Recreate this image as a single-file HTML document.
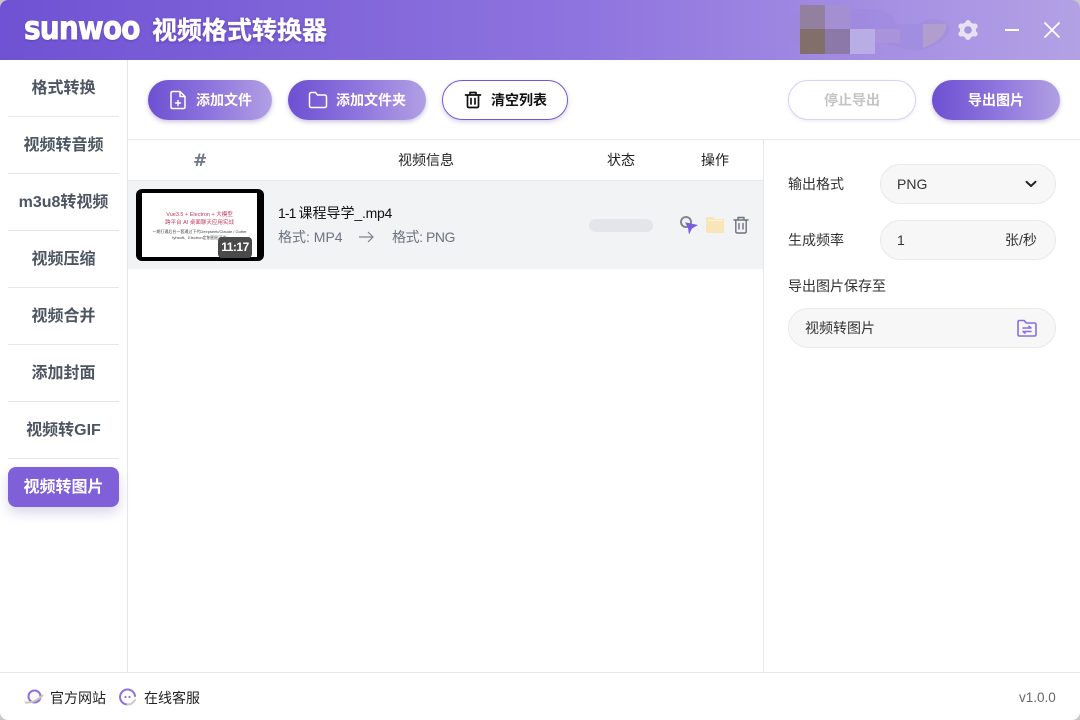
<!DOCTYPE html>
<html lang="zh-CN">
<head>
<meta charset="utf-8">
<title>视频格式转换器</title>
<style>
*{box-sizing:border-box;margin:0;padding:0}
html,body{width:1080px;height:720px;overflow:hidden;background:#c8c8c8}
body{font-family:"Liberation Sans","Noto Sans CJK SC",sans-serif;color:#222;position:relative}
.abs{position:absolute;white-space:nowrap}
#app{position:absolute;left:0;top:0;width:1080px;height:720px;background:#fff;border-radius:8px;overflow:hidden}
#head{position:absolute;left:0;top:0;width:1080px;height:60px;background:linear-gradient(90deg,#6f52d3 0%,#8f75df 55%,#b3a1e5 100%)}
.logo{left:24px;top:9px;font:bold 32px/38px "DejaVu Sans",sans-serif;color:#fff;letter-spacing:-1px;transform-origin:left center;transform:scaleX(.875);text-shadow:0 1px 3px rgba(50,20,120,.4);-webkit-text-stroke:.9px #fff}
.title{left:152px;top:13px;font-size:25px;line-height:36px;font-weight:700;color:#fff;text-shadow:0 1px 3px rgba(50,20,120,.45);-webkit-text-stroke:.3px #fff}
.blur{position:absolute}
.side{position:absolute;left:0;top:60px;width:128px;height:612px;border-right:1px solid #e6e6e8}
.nav{position:absolute;left:8px;width:111px;height:40px;text-align:center;font-size:16px;line-height:42px;font-weight:700;color:#4d5562}
.sep{position:absolute;left:8px;width:111px;height:1px;background:#e6e7e9}
.nav.on{background:#7f60d9;color:#fff;border-radius:8px;box-shadow:0 6px 12px rgba(90,70,170,.22)}
.btn{position:absolute;top:80px;height:40px;border-radius:20px;font-size:14px;line-height:40px;font-weight:700;color:#fff;background:linear-gradient(90deg,#6d50d2 0%,#8e74dd 50%,#b1a0e3 100%);box-shadow:0 2px 5px rgba(80,60,150,.3)}
.btn span{position:absolute;top:0;white-space:nowrap}
.btn svg{position:absolute}
.hline{position:absolute;height:1px;background:#e7e8ea}
.vline{position:absolute;width:1px;background:#e7e8ea}
.th{position:absolute;top:150px;font-size:14px;line-height:20px;color:#222;white-space:nowrap}
.field{position:absolute;background:#f7f7f7;border:1px solid #e9e9e9;border-radius:20px;height:40px}
.lbl{position:absolute;left:788px;font-size:14px;line-height:20px;color:#333;white-space:nowrap}
</style>
</head>
<body>
<div id="app">
  <div id="head">
    <div class="abs logo">sunwoo</div>
    <div class="abs title">视频格式转换器</div>
    <svg class="blur" style="left:778px;top:4px" width="180" height="50" viewBox="0 0 180 50">
      <path d="M2 26Q18 8 22 5H98Q115 8 118 20H140Q160 8 172 24Q170 36 150 44Q135 50 118 42L100 38Q85 50 40 46Q10 44 2 26Z" fill="#9c87d9" opacity=".35"/>
      <rect x="22" y="1" width="25" height="24" fill="#93809f"/>
      <rect x="47" y="1" width="25" height="24" fill="#a48fd2"/>
      <rect x="22" y="25" width="25" height="25" fill="#826f6b"/>
      <rect x="47" y="25" width="25" height="25" fill="#8c79a8"/>
      <rect x="72" y="25" width="25" height="25" fill="#b9ade6"/>
      <rect x="97" y="25" width="25" height="14" fill="#ac96d8" opacity=".7"/>
      <path d="M145 20H168Q170 34 145 44Z" fill="#b7a2c9" opacity=".75"/>
    </svg>
    <svg class="abs" style="left:956px;top:18px" width="24" height="24" viewBox="0 0 24 24">
      <g fill="#e7e2f2"><circle cx="12" cy="12" r="8"/><circle cx="12" cy="4.800" r="2.800"/><circle cx="12" cy="19.200" r="2.800"/><circle cx="5.200" cy="8.200" r="2.800"/><circle cx="18.800" cy="8.200" r="2.800"/><circle cx="5.200" cy="15.800" r="2.800"/><circle cx="18.800" cy="15.800" r="2.800"/></g>
      <circle cx="12" cy="12" r="3.800" fill="#a694e0"/>
    </svg>
    <div class="abs" style="left:1005px;top:29px;width:14px;height:2px;background:#fff"></div>
    <svg class="abs" style="left:1043px;top:21px" width="18" height="18" viewBox="0 0 18 18"><path d="M1.500 1.500L16.500 16.500M16.500 1.500L1.500 16.500" stroke="#fff" stroke-width="1.800"/></svg>
  </div>

  <div class="side"></div>
  <div class="nav" style="top:68px">格式转换</div>
  <div class="sep" style="top:116px"></div>
  <div class="nav" style="top:125px">视频转音频</div>
  <div class="sep" style="top:173px"></div>
  <div class="nav" style="top:182px">m3u8转视频</div>
  <div class="sep" style="top:230px"></div>
  <div class="nav" style="top:239px">视频压缩</div>
  <div class="sep" style="top:287px"></div>
  <div class="nav" style="top:296px">视频合并</div>
  <div class="sep" style="top:344px"></div>
  <div class="nav" style="top:353px">添加封面</div>
  <div class="sep" style="top:401px"></div>
  <div class="nav" style="top:410px">视频转GIF</div>
  <div class="sep" style="top:458px"></div>
  <div class="nav on" style="top:467px">视频转图片</div>

  <div class="btn" style="left:148px;width:124px">
    <svg style="left:20px;top:10px" width="20" height="20" viewBox="0 0 20 20" fill="none" stroke="#fff" stroke-width="1.500" stroke-linejoin="round" stroke-linecap="round"><path d="M3 3Q3 1.500 4.500 1.500H12L17 6.500V17Q17 18.500 15.500 18.500H4.500Q3 18.500 3 17ZM12 1.500V6.500H17M10 10.500V15.500M7.500 13H12.500"/></svg>
    <span style="left:48px">添加文件</span>
  </div>
  <div class="btn" style="left:288px;width:138px">
    <svg style="left:20px;top:10px" width="20" height="20" viewBox="0 0 20 20" fill="none" stroke="#fff" stroke-width="1.500" stroke-linejoin="round"><path d="M1.500 4.500Q1.500 2.500 3.500 2.500H7.500L9.500 5H16.500Q18.500 5 18.500 7V15.500Q18.500 17.500 16.500 17.500H3.500Q1.500 17.500 1.500 15.500Z"/></svg>
    <span style="left:48px">添加文件夹</span>
  </div>
  <div class="btn" style="left:442px;width:126px;background:#fff;border:1px solid #7358d6;color:#111;box-shadow:0 2px 5px rgba(90,70,170,.25);line-height:38px">
    <svg style="left:20px;top:9px" width="20" height="20" viewBox="0 0 20 20" fill="none" stroke="#111" stroke-width="1.700" stroke-linejoin="round" stroke-linecap="round"><path d="M2.500 5H17.500M7 5V2.500H13V5M4.500 5V16Q4.500 17.500 6 17.500H14Q15.500 17.500 15.500 16V5M8 8.500V14M12 8.500V14"/></svg>
    <span style="left:48px">清空列表</span>
  </div>
  <div class="btn" style="left:788px;width:128px;background:#fff;border:1px solid #d9d0f3;color:#c4c4c4;box-shadow:0 1px 3px rgba(90,70,170,.12);line-height:38px;text-align:center">停止导出</div>
  <div class="btn" style="left:932px;width:128px;text-align:center">导出图片</div>

  <div class="hline" style="left:128px;top:139px;width:952px"></div>
  <div class="vline" style="left:763px;top:140px;height:532px"></div>
  <div class="hline" style="left:0;top:672px;width:1080px"></div>

  <div class="abs" style="left:193px;top:151px;font:bold 17px/20px 'DejaVu Sans',sans-serif;color:#6f7786">#</div>
  <div class="th" style="left:398px">视频信息</div>
  <div class="th" style="left:607px">状态</div>
  <div class="th" style="left:701px">操作</div>

  <div class="abs" style="left:128px;top:180px;width:635px;height:89px;background:#f2f3f5;border-top:1px solid #e8e9eb"></div>
  <div class="abs" style="left:136px;top:189px;width:128px;height:72px;background:#000;border-radius:6px"></div>
  <div class="abs" style="left:142px;top:193px;width:115px;height:64px;background:#fff"></div>
  <div class="abs" style="left:142px;top:211px;width:115px;text-align:center;font-size:5.500px;line-height:8px;color:#c0395c">Vue3.5 + Electron + 大模型<br>跨平台 AI 桌面聊天应用实战</div>
  <div class="abs" style="left:142px;top:229px;width:115px;text-align:center;font-size:4px;line-height:6px;color:#444">一期打通后台一套通过下代Deepseek/Claude / Gutter<br>fyhsoft、Electron定制图形开发</div>
  <div class="abs" style="left:218px;top:237px;width:34px;height:21px;background:#4a4a4a;border-radius:4px;color:#fff;font-size:12px;font-weight:700;line-height:21px;text-align:center;letter-spacing:-.5px">11:17</div>
  <div class="abs" style="left:278px;top:203px;font-size:14px;line-height:20px;color:#111"><span style="letter-spacing:-.9px">1-1 </span>课程导学<span style="letter-spacing:-.3px">_.mp4</span></div>
  <div class="abs" style="left:278px;top:227px;font-size:14px;line-height:20px;color:#6c7480">格式: MP4</div>
  <svg class="abs" style="left:358px;top:230px" width="16" height="14" viewBox="0 0 16 14" fill="none" stroke="#7b828e" stroke-width="1.200"><path d="M1 7H15M10 2L15 7L10 12"/></svg>
  <div class="abs" style="left:392px;top:227px;font-size:14px;line-height:20px;color:#6c7480;letter-spacing:-.45px">格式: PNG</div>
  <div class="abs" style="left:589px;top:219px;width:64px;height:13px;background:#e4e5e8;border-radius:7px"></div>

  <svg class="abs" style="left:678px;top:214px" width="24" height="24" viewBox="0 0 24 24">
    <circle cx="8" cy="8" r="5" fill="none" stroke="#84868c" stroke-width="2"/>
    <path d="M7 8.300L20 11L14 14.500L11 20.500L10 14Z" fill="#7a5ce0"/>
  </svg>
  <svg class="abs" style="left:705px;top:216px" width="20" height="18" viewBox="0 0 20 18">
    <path d="M1 2Q1 1 2 1H8L10 3H18Q19 3 19 4V16Q19 17 18 17H2Q1 17 1 16Z" fill="#f8e6b8"/>
    <path d="M3 4.500H17" stroke="#fdf4dc" stroke-width="1"/>
  </svg>
  <svg class="abs" style="left:732px;top:216px" width="18" height="18" viewBox="0 0 18 18" fill="none" stroke="#6c727c" stroke-width="1.400" stroke-linejoin="round" stroke-linecap="round"><path d="M2 4H16M6 4V1.500H12V4M3.800 4V15.500Q3.800 17 5.300 17H12.700Q14.200 17 14.200 15.500V4M7 7.500V13M11 7.500V13"/></svg>

  <div class="lbl" style="top:174px">输出格式</div>
  <div class="field" style="left:880px;top:164px;width:176px"></div>
  <div class="abs" style="left:897px;top:174px;font-size:14px;line-height:20px;color:#333">PNG</div>
  <svg class="abs" style="left:1025px;top:180px" width="12" height="8" viewBox="0 0 12 8" fill="none" stroke="#222" stroke-width="2" stroke-linecap="round" stroke-linejoin="round"><path d="M1.500 1.800L6 6L10.500 1.800"/></svg>

  <div class="lbl" style="top:230px">生成频率</div>
  <div class="field" style="left:880px;top:220px;width:176px"></div>
  <div class="abs" style="left:897px;top:230px;font-size:14px;line-height:20px;color:#333">1</div>
  <div class="abs" style="left:1005px;top:230px;font-size:14px;line-height:20px;color:#333">张/秒</div>

  <div class="lbl" style="top:276px">导出图片保存至</div>
  <div class="field" style="left:788px;top:308px;width:268px"></div>
  <div class="abs" style="left:805px;top:318px;font-size:14px;line-height:20px;color:#333">视频转图片</div>
  <svg class="abs" style="left:1016px;top:318px" width="22" height="20" viewBox="0 0 22 20" fill="none" stroke="#8670dd" stroke-width="1.600" stroke-linejoin="round" stroke-linecap="round"><path d="M2 4Q2 2.500 3.500 2.500H8L10.500 5H18.500Q20 5 20 6.500V16.500Q20 18 18.500 18H3.500Q2 18 2 16.500ZM7 10H15L13 8.300M15 13.500H7L9 15.200"/></svg>

  <svg class="abs" style="left:23px;top:687px" width="22" height="20" viewBox="0 0 22 20" fill="none">
    <circle cx="11.500" cy="9.500" r="6" stroke="#8b72dc" stroke-width="2"/>
    <path d="M2.500 15.500Q11 16.500 19.500 8.500" stroke="#cfc6b8" stroke-width="2" stroke-linecap="round"/>
  </svg>
  <div class="abs" style="left:50px;top:688px;font-size:14px;line-height:20px;color:#222">官方网站</div>
  <svg class="abs" style="left:118px;top:688px" width="20" height="20" viewBox="0 0 20 20" fill="none">
    <path d="M17 8A7.500 7.500 0 1 0 9.500 16.500" stroke="#8b72dc" stroke-width="2" stroke-linecap="round"/>
    <path d="M9.500 16.500Q14.500 16.500 17 12" stroke="#cfc6d8" stroke-width="2" stroke-linecap="round"/>
    <circle cx="7.500" cy="9" r="1.100" fill="#8b72dc"/><circle cx="11.500" cy="9" r="1.100" fill="#8b72dc"/>
  </svg>
  <div class="abs" style="left:144px;top:688px;font-size:14px;line-height:20px;color:#222">在线客服</div>
  <div class="abs" style="left:1019px;top:689px;font-size:13.500px;line-height:18px;color:#666">v1.0.0</div>
</div>
</body>
</html>
